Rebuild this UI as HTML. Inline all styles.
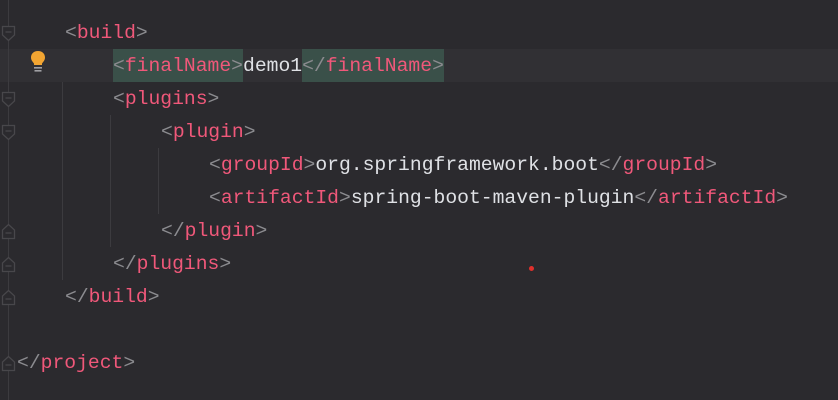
<!DOCTYPE html>
<html><head><style>
body{margin:0;width:838px;height:400px;background:#2b2a2e;overflow:hidden;position:relative;font-family:"Liberation Mono",monospace;font-size:19.7px;}
.l{position:absolute;height:33px;line-height:35px;white-space:pre;color:#dfe1e5}
.b{color:#8b8b8f}.t{color:#f0587a}
.h{background:#3a5049;display:inline-block;height:33px}
.cur{position:absolute;left:0;top:49px;width:838px;height:33px;background:#313034}
.g{position:absolute;width:1px;background:#3c3b3f}
.f{position:absolute;left:1px;width:15px;height:17px}
</style></head><body>
<div class="cur"></div>
<div class="g" style="left:8px;top:0;height:400px"></div>
<div class="g" style="left:62px;top:82px;height:198px"></div>
<div class="g" style="left:110px;top:115px;height:132px"></div>
<div class="g" style="left:158px;top:148px;height:66px"></div>
<svg class="f" style="top:25px" viewBox="0 0 15 17"><path d="M1.5 1.5H13.5V10L7.5 15.5L1.5 10Z M4.5 7H10.5" fill="#2b2a2e" stroke="#48474b" stroke-width="1.3"/></svg>
<svg class="f" style="top:91px" viewBox="0 0 15 17"><path d="M1.5 1.5H13.5V10L7.5 15.5L1.5 10Z M4.5 7H10.5" fill="#2b2a2e" stroke="#48474b" stroke-width="1.3"/></svg>
<svg class="f" style="top:124px" viewBox="0 0 15 17"><path d="M1.5 1.5H13.5V10L7.5 15.5L1.5 10Z M4.5 7H10.5" fill="#2b2a2e" stroke="#48474b" stroke-width="1.3"/></svg>
<svg class="f" style="top:223px" viewBox="0 0 15 17"><path d="M1.5 15.5H13.5V7L7.5 1.5L1.5 7Z M4.5 10H10.5" fill="#2b2a2e" stroke="#48474b" stroke-width="1.3"/></svg>
<svg class="f" style="top:256px" viewBox="0 0 15 17"><path d="M1.5 15.5H13.5V7L7.5 1.5L1.5 7Z M4.5 10H10.5" fill="#2b2a2e" stroke="#48474b" stroke-width="1.3"/></svg>
<svg class="f" style="top:289px" viewBox="0 0 15 17"><path d="M1.5 15.5H13.5V7L7.5 1.5L1.5 7Z M4.5 10H10.5" fill="#2b2a2e" stroke="#48474b" stroke-width="1.3"/></svg>
<svg class="f" style="top:355px" viewBox="0 0 15 17"><path d="M1.5 15.5H13.5V7L7.5 1.5L1.5 7Z M4.5 10H10.5" fill="#2b2a2e" stroke="#48474b" stroke-width="1.3"/></svg>
<svg style="position:absolute;left:29px;top:50px" width="18" height="24" viewBox="0 0 18 24"><path d="M9 1C4.5 1 2 4 2 7.5C2 10 3.5 11.5 5 13.5V15H13V13.5C14.5 11.5 16 10 16 7.5C16 4 13.5 1 9 1Z" fill="#f2a532"/><rect x="5" y="17" width="8" height="1.6" fill="#a0a0a4"/><rect x="5.5" y="20" width="7" height="1.6" fill="#a0a0a4"/></svg>
<div class="l" style="left:65px;top:16px"><span class="b">&lt;</span><span class="t">build</span><span class="b">&gt;</span></div>
<div class="l" style="left:113px;top:49px"><span class="h"><span class="b">&lt;</span><span class="t">finalName</span><span class="b">&gt;</span></span>demo1<span class="h"><span class="b">&lt;/</span><span class="t">finalName</span><span class="b">&gt;</span></span></div>
<div class="l" style="left:113px;top:82px"><span class="b">&lt;</span><span class="t">plugins</span><span class="b">&gt;</span></div>
<div class="l" style="left:161px;top:115px"><span class="b">&lt;</span><span class="t">plugin</span><span class="b">&gt;</span></div>
<div class="l" style="left:209px;top:148px"><span class="b">&lt;</span><span class="t">groupId</span><span class="b">&gt;</span>org.springframework.boot<span class="b">&lt;/</span><span class="t">groupId</span><span class="b">&gt;</span></div>
<div class="l" style="left:209px;top:181px"><span class="b">&lt;</span><span class="t">artifactId</span><span class="b">&gt;</span>spring-boot-maven-plugin<span class="b">&lt;/</span><span class="t">artifactId</span><span class="b">&gt;</span></div>
<div class="l" style="left:161px;top:214px"><span class="b">&lt;/</span><span class="t">plugin</span><span class="b">&gt;</span></div>
<div class="l" style="left:113px;top:247px"><span class="b">&lt;/</span><span class="t">plugins</span><span class="b">&gt;</span></div>
<div class="l" style="left:65px;top:280px"><span class="b">&lt;/</span><span class="t">build</span><span class="b">&gt;</span></div>
<div class="l" style="left:17px;top:346px"><span class="b">&lt;/</span><span class="t">project</span><span class="b">&gt;</span></div>
<div style="position:absolute;left:529px;top:266px;width:5px;height:5px;border-radius:50%;background:#e0302c"></div>
</body></html>
